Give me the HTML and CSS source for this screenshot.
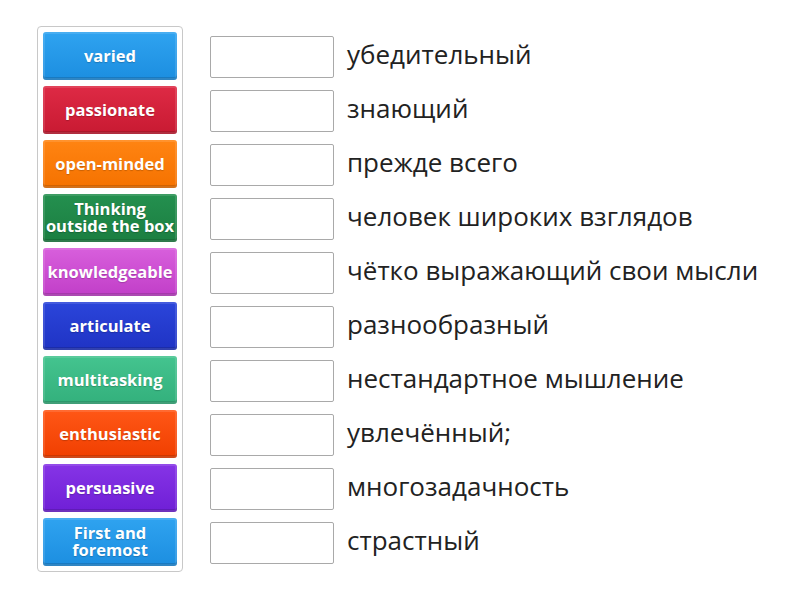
FILE: index.html
```html
<!DOCTYPE html>
<html lang="ru">
<head>
    <meta charset="UTF-8">
    <title>Match up</title>
    <link rel="stylesheet" href="styles.css">
</head>
<body>
    <div class="game">
        <div class="tiles">
            <div class="tile blue">varied</div>
            <div class="tile red">passionate</div>
            <div class="tile orange">open-minded</div>
            <div class="tile green">Thinking outside the box</div>
            <div class="tile pink">knowledgeable</div>
            <div class="tile navy">articulate</div>
            <div class="tile mint">multitasking</div>
            <div class="tile flame">enthusiastic</div>
            <div class="tile purple">persuasive</div>
            <div class="tile blue">First and foremost</div>
        </div>
        <div class="targets">
            <div class="row"><div class="slot"></div><span class="label">убедительный</span></div>
            <div class="row"><div class="slot"></div><span class="label">знающий</span></div>
            <div class="row"><div class="slot"></div><span class="label">прежде всего</span></div>
            <div class="row"><div class="slot"></div><span class="label">человек широких взглядов</span></div>
            <div class="row"><div class="slot"></div><span class="label">чётко выражающий свои мысли</span></div>
            <div class="row"><div class="slot"></div><span class="label">разнообразный</span></div>
            <div class="row"><div class="slot"></div><span class="label">нестандартное мышление</span></div>
            <div class="row"><div class="slot"></div><span class="label">увлечённый;</span></div>
            <div class="row"><div class="slot"></div><span class="label">многозадачность</span></div>
            <div class="row"><div class="slot"></div><span class="label">страстный</span></div>
        </div>
    </div>
</body>
</html>
```

FILE: styles.css
```css
body {
    margin: 0;
    background: #fff;
    font-family: 'Open Sans', sans-serif;
}

.game {
    display: flex;
    align-items: flex-start;
    gap: 27px;
    padding: 26px 0 0 37px;
}

/* Columna de fichas */
.tiles {
    display: flex;
    flex-direction: column;
    gap: 6px;
    width: 146px;
    box-sizing: border-box;
    padding: 5px;
    border: 1px solid #c8c8c8;
    border-radius: 4px;
}

.tile {
    height: 48px;
    box-sizing: border-box;
    display: flex;
    align-items: center;
    justify-content: center;
    padding: 0 2px 2px;
    text-align: center;
    color: #fff;
    font-size: 16.5px;
    font-weight: 700;
    line-height: 17px;
    border-radius: 3px;
    text-shadow: 0 1px 1px rgba(0, 0, 0, 0.2);
    box-shadow: inset 0 -3px 0 rgba(0, 0, 0, 0.14), inset 0 0 0 2px rgba(255, 255, 255, 0.12);
}

.blue   { background: linear-gradient(#2fa3f0, #1c8ee0); }
.red    { background: linear-gradient(#de2a45, #c81a32); }
.orange { background: linear-gradient(#ff8412, #f57200); }
.green  { background: linear-gradient(#24904f, #1b7e41); }
.pink   { background: linear-gradient(#d85fdc, #c13ec8); }
.navy   { background: linear-gradient(#2b45da, #1f33c4); }
.mint   { background: linear-gradient(#44c48f, #33b07c); }
.flame  { background: linear-gradient(#ff5716, #f03f00); }
.purple { background: linear-gradient(#8634e6, #6f1fd6); }

/* Columna de respuestas */
.targets {
    display: flex;
    flex-direction: column;
    gap: 6px;
    padding-top: 6px;
}

.row {
    display: flex;
    align-items: center;
    height: 48px;
    gap: 13px;
}

.slot {
    width: 124px;
    height: 42px;
    margin-top: 2px;
    box-sizing: border-box;
    border: 1px solid #a9a9a9;
    border-radius: 2px;
    background: #fff;
}

.label {
    font-size: 26px;
    line-height: 30px;
    margin-top: -4px;
    color: #222;
    white-space: nowrap;
}
```
